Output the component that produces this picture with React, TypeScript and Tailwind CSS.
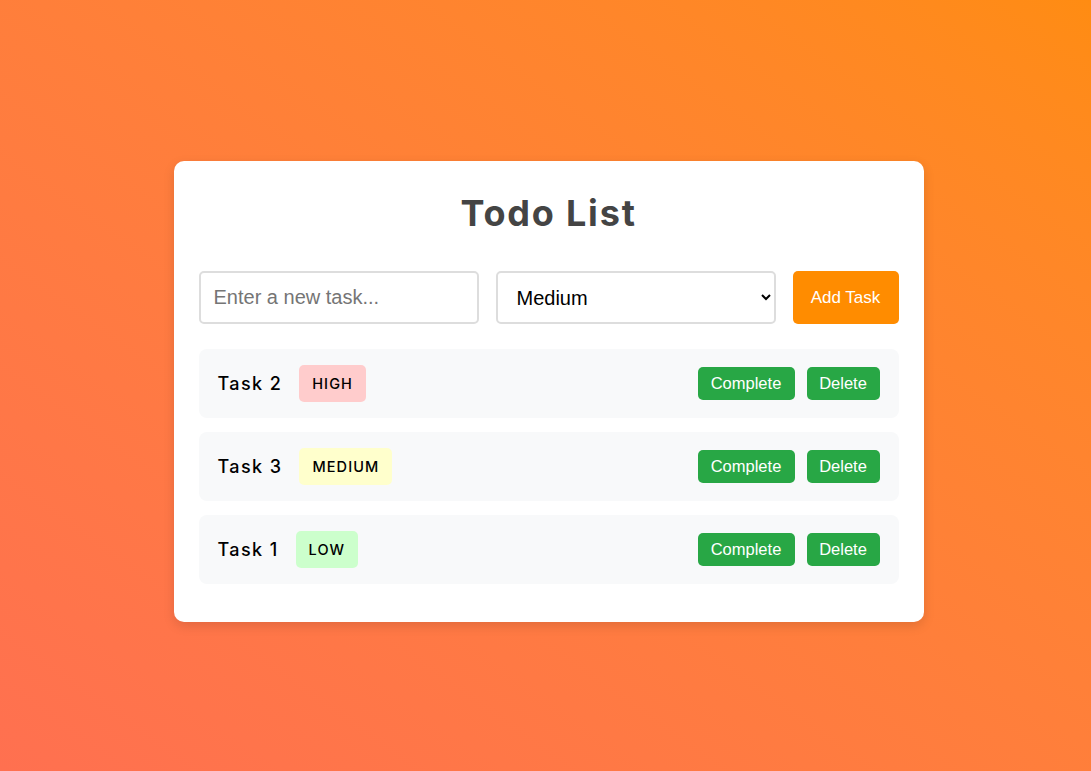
import React, { useState } from 'react';

type Task = { id: number; name: string; priority: 'high' | 'medium' | 'low' };

const badgeStyle: Record<Task['priority'], string> = {
  high: 'bg-[#ffcccc]',
  medium: 'bg-[#ffffcc]',
  low: 'bg-[#ccffcc]',
};

export default function App() {
  const [tasks] = useState<Task[]>([
    { id: 2, name: 'Task 2', priority: 'high' },
    { id: 3, name: 'Task 3', priority: 'medium' },
    { id: 1, name: 'Task 1', priority: 'low' },
  ]);
  const [text, setText] = useState('');
  const [priority, setPriority] = useState('medium');

  return (
    <div
      className="min-h-screen w-full flex items-center justify-center bg-linear-to-tr from-[#ff7050] to-[#ff8c12]"
      style={{ fontFamily: 'Inter, "Noto Sans", sans-serif' }}
    >
      <div className="w-[750px] ml-[6px] mt-[12px] bg-white rounded-[10px] p-[25px] shadow-[0_4px_12px_rgba(0,0,0,0.12)]">
        <h1 className="text-center text-[36px] leading-[54px] font-bold text-[#444] mb-[31px] tracking-[1.8px]">
          Todo List
        </h1>
        <div className="flex gap-[17px] mb-[25px]">
          <input
            value={text}
            onChange={e => setText(e.target.value)}
            placeholder="Enter a new task..."
            className="w-[280px] h-[53px] border-2 border-[#ddd] rounded-[5px] px-[13px] text-[20px] text-black placeholder:text-[#757575] outline-none"
            style={{ fontFamily: '"Liberation Sans", Arial, sans-serif' }}
          />
          <select
            value={priority}
            onChange={e => setPriority(e.target.value)}
            className="w-[280px] h-[53px] border-2 border-[#ddd] rounded-[5px] px-[15px] text-[20px] text-black bg-white outline-none"
            style={{ fontFamily: '"Liberation Sans", Arial, sans-serif' }}
          >
            <option value="high">High</option>
            <option value="medium">Medium</option>
            <option value="low">Low</option>
          </select>
          <button
            className="w-[106px] h-[53px] bg-[#ff8c00] text-white rounded-[5px] text-[17px]"
            style={{ fontFamily: '"Liberation Sans", Arial, sans-serif' }}
          >
            Add Task
          </button>
        </div>
        <div className="flex flex-col">
          {tasks.map(t => (
            <div
              key={t.id}
              className="h-[69px] mb-[14px] last:mb-[13px] bg-[#f8f9fa] rounded-[8px] flex items-center justify-between pl-[19px] pr-[19px]"
            >
              <div className="flex items-center gap-[17px]">
                <span className="text-[18px] font-medium text-black tracking-[1.4px]">{t.name}</span>
                <span className={`${badgeStyle[t.priority]} rounded-[5px] h-[37px] px-[13px] flex items-center text-[14.5px] font-medium uppercase text-black tracking-[1.1px]`}>
                  {t.priority}
                </span>
              </div>
              <div
                className="flex gap-[12px]"
                style={{ fontFamily: '"Liberation Sans", Arial, sans-serif' }}
              >
                <button className="w-[97px] h-[33px] bg-[#28a745] text-white rounded-[5px] text-[16.5px]">Complete</button>
                <button className="w-[73px] h-[33px] bg-[#28a745] text-white rounded-[5px] text-[16.5px]">Delete</button>
              </div>
            </div>
          ))}
        </div>
      </div>
    </div>
  );
}
